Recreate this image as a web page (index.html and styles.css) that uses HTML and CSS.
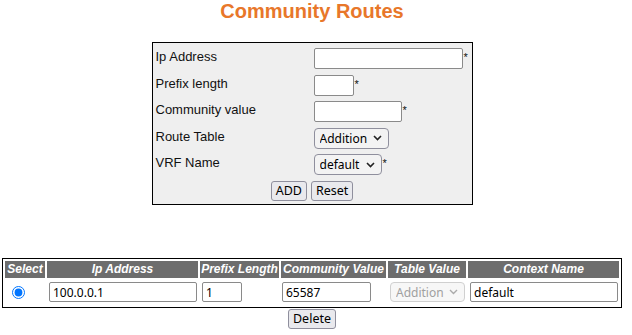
FILE: index.html
```html
<!DOCTYPE html>
<html lang="en">
<head>
  <meta charset="UTF-8" />
  <title>Community Routes</title>
  <link rel="stylesheet" href="styles.css">
</head>
<body>
  <h1 class="page-title">Community Routes</h1>

  <!-- add form -->
  <form class="form-box" onsubmit="return false;">
    <div class="form-row">
      <label for="ipAddr">Ip Address</label>
      <input type="text" id="ipAddr" class="in-ip" /><span class="req">*</span>
    </div>
    <div class="form-row">
      <label for="prefixLen">Prefix length</label>
      <input type="text" id="prefixLen" class="in-prefix" /><span class="req">*</span>
    </div>
    <div class="form-row">
      <label for="commVal">Community value</label>
      <input type="text" id="commVal" class="in-comm" /><span class="req">*</span>
    </div>
    <div class="form-row">
      <label for="routeTable">Route Table</label>
      <select id="routeTable" class="sel-route">
        <option>Addition</option>
        <option>Deletion</option>
      </select>
    </div>
    <div class="form-row">
      <label for="vrfName">VRF Name</label>
      <select id="vrfName" class="sel-vrf">
        <option>default</option>
      </select><span class="req">*</span>
    </div>
    <div class="form-buttons">
      <button type="button" class="btn">ADD</button>
      <button type="reset" class="btn">Reset</button>
    </div>
  </form>

  <!-- existing routes -->
  <table class="route-table">
    <thead>
      <tr>
        <th class="c-sel">Select</th>
        <th class="c-ip">Ip Address</th>
        <th class="c-prefix">Prefix Length</th>
        <th class="c-comm">Community Value</th>
        <th class="c-table">Table Value</th>
        <th class="c-ctx">Context Name</th>
      </tr>
    </thead>
    <tbody>
      <tr>
        <td><input type="radio" name="sel" checked /></td>
        <td><input type="text" class="cell-ip" value="100.0.0.1" /></td>
        <td><input type="text" class="cell-prefix" value="1" /></td>
        <td><input type="text" class="cell-comm" value="65587" /></td>
        <td>
          <select class="cell-sel" disabled>
            <option>Addition</option>
          </select>
        </td>
        <td><input type="text" class="cell-ctx" value="default" /></td>
      </tr>
    </tbody>
  </table>

  <div class="table-buttons">
    <button type="button" class="btn">Delete</button>
  </div>
</body>
</html>
```

FILE: styles.css
```css
body {
  margin: 0;
  padding: 0 10px 0 2px;
  font-family: 'Liberation Sans', Arial, sans-serif;
  font-size: 13px;
  color: #111;
  background: #fff;
}
.page-title {
  margin: 0;
  font-size: 20px;
  line-height: 23px;
  font-weight: bold;
  text-align: center;
  color: #e8772a;
}

/* form box */
.form-box {
  box-sizing: border-box;
  width: 321px;
  margin: 19px auto 0;
  padding: 5px 3px 3px;
  border: 1px solid #000;
  background: #efefef;
}
.form-row {
  display: flex;
  align-items: center;
  height: 21px;
  margin-bottom: 5.6px;
}
.form-row label {
  width: 158px;
  flex: none;
  align-self: flex-start;
  margin-top: 1px;
  line-height: 15px;
}
.req {
  font-size: 11px;
  margin-left: 1px;
  align-self: flex-start;
  margin-top: 3px;
}
input[type="text"] {
  box-sizing: border-box;
  height: 21px;
  padding: 1px 3px;
  border: 1px solid #8a8a8a;
  border-radius: 2px;
  background: #fff;
  font-family: 'Noto Sans', sans-serif;
  font-size: 12px;
  color: #000;
}
.in-ip { width: 149px; }
.in-prefix { width: 40px; }
.in-comm { width: 88px; }

select {
  -webkit-appearance: none;
  appearance: none;
  box-sizing: border-box;
  height: 21px;
  padding: 0 18px 0 5px;
  border: 1px solid #8f8f9d;
  border-radius: 4px;
  background: #f3f3f3 url("data:image/svg+xml;utf8,<svg xmlns='http://www.w3.org/2000/svg' width='9' height='6' viewBox='0 0 9 6'><path d='M1 1 L4.5 4.5 L8 1' fill='none' stroke='%23222' stroke-width='1.6'/></svg>") no-repeat right 6px center;
  font-family: 'Noto Sans', sans-serif;
  font-size: 12px;
  color: #000;
}
.sel-route { width: 75px; }
.sel-vrf { width: 68px; }

.form-buttons {
  display: flex;
  justify-content: center;
  gap: 4px;
}
.btn {
  height: 20px;
  padding: 0 4px;
  border: 1px solid #8f8f9d;
  border-radius: 3px;
  background: #e9e9ed;
  font-family: 'Noto Sans', sans-serif;
  font-size: 12.5px;
  color: #000;
  line-height: 16px;
}

/* route table */
.route-table {
  width: 620px;
  margin-top: 53px;
  table-layout: fixed;
  border-collapse: separate;
  border-spacing: 2px;
  border: 1px solid #000;
  background: #fff;
}
.route-table th,
.route-table td {
  box-sizing: border-box;
  padding: 0 2px;
}
.route-table th {
  height: 17px;
  background: #6d6d6d;
  color: #fff;
  font-size: 12px;
  font-style: italic;
  font-weight: bold;
  text-align: center;
  white-space: nowrap;
  overflow: hidden;
  padding: 0 1px;
}
.route-table td {
  height: 25px;
  vertical-align: middle;
}
.c-sel { width: 40px; }
.c-ip { width: 151px; }
.c-prefix { width: 79px; }
.c-comm { width: 105px; }
.c-table { width: 78px; }
.c-ctx { width: 151px; }

.route-table input[type="radio"] {
  margin: 3px 3px 0 5px;
  accent-color: #0075ff;
}
.route-table input[type="text"] {
  height: 20px;
}
.cell-ip { width: 148px; }
.cell-prefix { width: 40px; }
.cell-comm { width: 89px; margin-left: -1px; }
.cell-ctx { width: 148px; }
.cell-sel {
  width: 75px;
  height: 20px;
  border-color: #d0d0d0;
  background-color: #f7f7f7;
  color: #a0a0a0;
  opacity: 1;
}
.cell-sel:disabled {
  background-image: url("data:image/svg+xml;utf8,<svg xmlns='http://www.w3.org/2000/svg' width='9' height='6' viewBox='0 0 9 6'><path d='M1 1 L4.5 4.5 L8 1' fill='none' stroke='%23aaa' stroke-width='1.4'/></svg>");
}

.table-buttons {
  display: flex;
  justify-content: center;
  margin-top: 1px;
}
```
